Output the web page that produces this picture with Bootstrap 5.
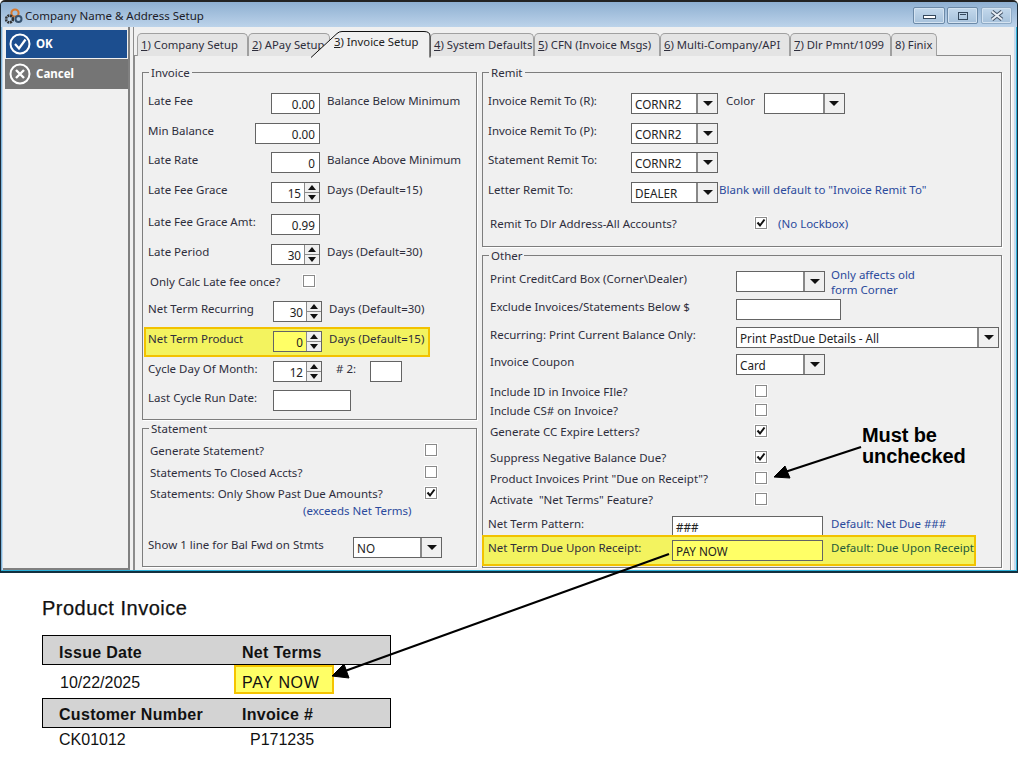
<!doctype html>
<html lang="en"><head><meta charset="utf-8"><title>Company Name &amp; Address Setup</title>
<link href="https://cdn.jsdelivr.net/npm/bootstrap@5.3.0/dist/css/bootstrap.min.css" rel="stylesheet">
<style>
html,body{margin:0;width:1018px;height:758px;overflow:hidden;background:#fff}
body{font-family:"Noto Sans","Liberation Sans",sans-serif;font-size:11.5px;line-height:15px;color:#2e2e3c}
.stage{position:relative;width:1018px;height:758px}
.win{height:573px;width:1018px;background:#c4d9ec;border:1px solid #1b2a38;border-top:2px solid #222;border-bottom:2px solid #12303f;box-shadow:inset 0 -1px 0 #2db0d8,inset -1px 0 0 #2db0d8,inset 1px 0 0 #7fb6dc;border-radius:5px 5px 0 0}
.ttl{height:25px;background:linear-gradient(#8eafd1,#bcd3ea);padding:2px 5px 0 3px;border-radius:4px 4px 0 0}
.ttl-t{font-size:11.5px;margin-left:1px;color:#1c1c28}
.wb{height:17px;border:1px solid #6c8aa8;background:linear-gradient(#c4d9ec,#a6c1db);box-shadow:inset 0 0 0 1px #d4e3f1;border-radius:2px}
.wb1{width:32px;margin-right:2px}.wb2{width:31px;margin-right:3px}.wb3{width:31px;border-color:#8fabc6}
.wbody{height:543px;margin:0 3px 0 2px}
.side{width:127px;background:#f0f0f0;border-right:2px solid #808080;border-bottom:2px solid #808080;padding-top:3px;flex:none}
.sbtn{height:29px;width:123px;border:0;border-radius:0;color:#fff;font-weight:700;font-size:11.5px;padding:0 0 0 4px;text-align:left;gap:5px;display:flex;align-items:center}
.sbtn:hover{color:#fff}
.s-ok{background:#1c4e8f;margin:0 0 1px 3px;width:121px;height:28px;padding-left:3px}
.s-ok:hover{background:#1c4e8f}
.s-cn{background:#757575;margin-left:2px;height:30px}
.s-cn:hover{background:#757575}
.gut{width:3px;background:#f0f0f0;flex:none}
.main{flex:1;background:#f0f0f0;padding-top:6px;position:relative;border-left:1px solid #8c8c8c}
.tabs{height:23px;padding-left:3px;flex-wrap:nowrap;margin:0;border:0;position:relative;z-index:2}
.tabs .nav-link{height:23px;padding:3px 0 0 3px;margin:0;border:1px solid #a0a0a0;border-bottom:0;border-radius:5px 5px 0 0;background:#e4e4e4;color:#2e2e3c;font-size:11.3px;line-height:15px;white-space:nowrap;text-align:left;width:var(--w)}
.t1{--w:111px}.t2{--w:82px}.t4{--w:104px}.t5{--w:126px}.t6{--w:130px}.t7{--w:101px}.t8{--w:46px}
.tabs .nav-link.t3{position:relative;width:118px;height:26px;margin:-2px 0 0 -18px;padding:3px 0 0 22px;background:none;border:0;color:#222}
.t3 svg{position:absolute;left:-1px;top:0}
.t3 span{position:relative}
.page{height:515px;border:1px solid #8c8c8c;border-bottom:0;padding:16px 0 0 7px;gap:5px;background:#f0f0f0;margin:-1px 3px 0 0;box-shadow:1px 0 0 #fff}
.c1{width:335px}.c2{width:520px}
.col-stack{display:flex;flex-direction:column;gap:8px}
.grp{position:relative;border:1px solid #7d7d7d;padding-left:5px;box-shadow:1px 1px 0 #fff}
.lg{position:absolute;top:-8px;left:6px;background:#f0f0f0;padding:0 2px}
.g-inv{height:348px;padding-top:20px}
.g-stm{height:139px;padding-top:14px}
.g-rem{height:175px;padding-top:20px}
.g-oth{height:313px;padding-top:15px}
.rows{display:grid;align-content:start}
.r-inv{grid-template-rows:30px 29px 30px 32px 30px 30px 27px 30px 30px 29px 21px}
.r-stm{grid-template-rows:22px 21px 17px 34px 21px}
.r-rem{grid-template-rows:30px 29px 30px 34px 15px}
.r-oth{grid-template-rows:28px 28px 27px 30px 19px 21px 26px 21px 21px 24px 24px 21px}
.rw{display:flex;align-items:flex-start;white-space:nowrap}
.rw>span{flex:none}
.i2{padding-left:2px}
.w107{width:107px}.w123{width:123px}.w125{width:125px}.w153{width:153px}.w275{width:275px}.w205{width:205px}.w143{width:143px}
.w246{width:246px}.w265{width:265px}.w184{width:184px}
.pl155{padding-left:155px}
.tb,.sel,.spn{height:21px;border:1px solid #646464;background:#fff;display:flex;flex:none;font-size:11.7px;line-height:18px;color:#222}
.tb{padding:1px 4px 0;justify-content:flex-end}
.tl{justify-content:flex-start;padding-left:3px}
.spn{width:49px}
.spn>span:first-child{flex:1;text-align:right;padding:1px 3px 0 0}
.sp-b{width:15px;border-left:1px solid #8a8a8a;display:flex;flex-direction:column;background:#f0f0f0}
.sp-b i{flex:1;display:flex;align-items:center;justify-content:center}
.sp-b i+i{border-top:1px solid #8a8a8a}
.sp-b i::after{content:"";border:4px solid transparent;border-top:0;border-bottom:5px solid #111}
.sp-b i+i::after{border:4px solid transparent;border-bottom:0;border-top:5px solid #111}
.sel{justify-content:space-between}
.sel>span{padding:1px 0 0 3px}
.sel>i{width:21px;border-left:2px solid #888;background:#f0f0f0;display:flex;align-items:center;justify-content:center}
.sel>i::after{content:"";border:5px solid transparent;border-bottom:0;border-top:5px solid #111}
.x48{width:49px}.x64{width:65px}.x50{width:32px}.x77{width:78px}.x105{width:105px}.x151{width:151px}
.s87{width:87px}.s81{width:81px}.s89{width:89px}.s263{width:263px}
.chk{width:12px;height:12px;flex:none;background:#fff;border:1px solid #8a8a8a;box-shadow:0 0 0 1px #fdfdfd;margin-top:1px;display:block}
.chk svg{display:block}
.ml7{margin-left:7px}.ml6{margin-left:6px}.ml1{margin-left:1px}.ml11{margin-left:11px}.mr9{margin-right:9px}.ml14{margin-left:14px}.mr13{margin-right:14px}.blu{color:#2b4a9c}
.up4{margin-top:-4px}
.hl{background:#f3f35f;border:2px solid #f2c200}
.hl .blu{color:#245a3a}
.hl .tb,.hl .spn>span:first-child{background:#ffff66}
.h-a{margin:-4px 0 -5px -4px;padding:2px 0 0 2px;width:286px;height:30px}
.h-b{margin:-5px 0 -5px -6px;padding:3px 0 0 4px;width:494px;height:31px}
.note{position:absolute;left:862px;top:425px;font:700 20px/21px "Liberation Sans",Arial,sans-serif;color:#000;letter-spacing:-.1px}
.inv{margin:24px 0 0 42px;width:349px;font-family:"Liberation Sans",Arial,sans-serif;font-size:16px;line-height:18px;color:#111}
.inv h2{font:400 20px/23px "Liberation Sans",Arial,sans-serif;letter-spacing:.5px;margin:0 0 15px;color:#111;-webkit-text-stroke:.25px #111}
.bar{background:#d3d3d3;border:1px solid #000;height:30px;font-weight:700;align-items:center;letter-spacing:.3px}
.b1{padding-top:6px}.b2{padding-top:4px}
.c-a{width:199px;padding-left:16px;flex:none}
.c-b{width:200px;padding-left:17px;flex:none}
.c-c{width:200px;padding-left:18px;flex:none}
.ir{height:33px;align-items:center;padding-top:2px}
.ir2{height:24px;align-items:center}
.paybox{background:#ffff66;border:2px solid #f5c400;width:100px;height:29px;margin:-6px 0 0 -8px;padding-left:6px;line-height:27px;padding-top:2px;font-size:16px;letter-spacing:.65px}
.ind8{padding-left:8px}
.arrows{position:absolute;left:0;top:0;pointer-events:none}
</style></head><body>
<div class="stage">
<div class="win">
  <div class="ttl d-flex align-items-center">
    <svg width="20" height="18" viewBox="0 0 20 18"><circle cx="11" cy="6" r="3.6" fill="none" stroke="#d9772a" stroke-width="2"/><circle cx="5.500" cy="12" r="3.400" fill="none" stroke="#333" stroke-width="2.600" stroke-dasharray="2 .7"/><circle cx="14.500" cy="12" r="3" fill="none" stroke="#36526f" stroke-width="2"/></svg>
    <span class="ttl-t flex-grow-1">Company Name &amp; Address Setup</span>
    <div class="wb wb1 d-flex align-items-end justify-content-center pb-1"><svg width="13" height="4"><rect x=".5" y=".5" width="12" height="3" fill="#fff" stroke="#35485c"/></svg></div>
    <div class="wb wb2 d-flex align-items-center justify-content-center"><svg width="12" height="10"><rect x="1.500" y="1.500" width="9" height="7" fill="none" stroke="#35485c" stroke-width="1"/><path d="M3 3.500h6" stroke="#35485c"/></svg></div>
    <div class="wb wb3 d-flex align-items-center justify-content-center"><svg width="14" height="11"><path d="M2 1.500l10 8M12 1.500l-10 8" stroke="#47566a" stroke-width="4"/><path d="M2 1.500l10 8M12 1.500l-10 8" stroke="#e8eef5" stroke-width="2"/></svg></div>
  </div>
  <div class="wbody d-flex">
    <div class="side">
      <button class="btn sbtn s-ok"><svg width="22" height="22" viewBox="0 0 22 22"><circle cx="11" cy="11" r="9.500" fill="none" stroke="#fff" stroke-width="2"/><path d="M6 11l4 4.500 6.500-9" fill="none" stroke="#fff" stroke-width="2.200"/></svg>OK</button>
      <button class="btn sbtn s-cn"><svg width="22" height="22" viewBox="0 0 22 22"><circle cx="11" cy="11" r="9.500" fill="none" stroke="#fff" stroke-width="2"/><path d="M7 7l8 8M15 7l-8 8" stroke="#fff" stroke-width="2.400"/></svg>Cancel</button>
    </div>
    <div class="gut"></div>
    <div class="main">
      <ul class="nav nav-tabs tabs">
        <li class="nav-item"><a class="nav-link t1"><u>1</u>) Company Setup</a></li>
        <li class="nav-item"><a class="nav-link t2"><u>2</u>) APay Setup</a></li>
        <li class="nav-item"><a class="nav-link t3 active"><svg width="120" height="27" viewBox="0 0 120 27"><path d="M0 26.500L26 2.500Q28 .5 31 .5H113Q119 .5 119 5V26.500" fill="#f0f0f0" stroke="#111"/></svg><span><u>3</u>) Invoice Setup</span></a></li>
        <li class="nav-item"><a class="nav-link t4"><u>4</u>) System Defaults</a></li>
        <li class="nav-item"><a class="nav-link t5"><u>5</u>) CFN (Invoice Msgs)</a></li>
        <li class="nav-item"><a class="nav-link t6"><u>6</u>) Multi-Company/API</a></li>
        <li class="nav-item"><a class="nav-link t7"><u>7</u>) Dlr Pmnt/1099</a></li>
        <li class="nav-item"><a class="nav-link t8">8) Finix</a></li>
      </ul>
      <div class="page d-flex">
        <div class="col-stack c1">
          <section class="grp g-inv">
            <span class="lg">Invoice</span>
            <div class="rows r-inv">
              <div class="rw"><span class="w123">Late Fee</span><span class="tb x48">0.00</span><span class="ml7">Balance Below Minimum</span></div>
              <div class="rw"><span class="w107">Min Balance</span><span class="tb x64">0.00</span></div>
              <div class="rw"><span class="w123">Late Rate</span><span class="tb x48">0</span><span class="ml7">Balance Above Minimum</span></div>
              <div class="rw"><span class="w123">Late Fee Grace</span><span class="spn"><span>15</span><span class="sp-b"><i></i><i></i></span></span><span class="ml7">Days (Default=15)</span></div>
              <div class="rw"><span class="w123">Late Fee Grace Amt:</span><span class="tb x48">0.99</span></div>
              <div class="rw"><span class="w123">Late Period</span><span class="spn"><span>30</span><span class="sp-b"><i></i><i></i></span></span><span class="ml7">Days (Default=30)</span></div>
              <div class="rw i2"><span class="w153">Only Calc Late fee once?</span><span class="chk"></span></div>
              <div class="rw"><span class="w125">Net Term Recurring</span><span class="spn"><span>30</span><span class="sp-b"><i></i><i></i></span></span><span class="ml7">Days (Default=30)</span></div>
              <div class="rw hl h-a"><span class="w125">Net Term Product</span><span class="spn"><span>0</span><span class="sp-b"><i></i><i></i></span></span><span class="ml7">Days (Default=15)</span></div>
              <div class="rw"><span class="w125">Cycle Day Of Month:</span><span class="spn"><span>12</span><span class="sp-b"><i></i><i></i></span></span><span class="ml14 mr13"># 2:</span><span class="tb x50"></span></div>
              <div class="rw"><span class="w125">Last Cycle Run Date:</span><span class="tb x77"></span></div>
            </div>
          </section>
          <section class="grp g-stm">
            <span class="lg">Statement</span>
            <div class="rows r-stm">
              <div class="rw i2"><span class="w275">Generate Statement?</span><span class="chk"></span></div>
              <div class="rw i2"><span class="w275">Statements To Closed Accts?</span><span class="chk"></span></div>
              <div class="rw i2"><span class="w275">Statements: Only Show Past Due Amounts?</span><span class="chk"><svg width="10" height="10" viewBox="0 0 10 10"><path d="M1.500 4.500l2.500 3 4.500-6" fill="none" stroke="#111" stroke-width="2"/></svg></span></div>
              <div class="rw blu"><span class="pl155">(exceeds Net Terms)</span></div>
              <div class="rw"><span class="w205">Show 1 line for Bal Fwd on Stmts</span><span class="sel s89"><span>NO</span><i></i></span></div>
            </div>
          </section>
        </div>
        <div class="col-stack c2">
          <section class="grp g-rem">
            <span class="lg">Remit</span>
            <div class="rows r-rem">
              <div class="rw"><span class="w143">Invoice Remit To (R):</span><span class="sel s87"><span>CORNR2</span><i></i></span><span class="ms-2 mr9">Color</span><span class="sel s81"><span></span><i></i></span></div>
              <div class="rw"><span class="w143">Invoice Remit To (P):</span><span class="sel s87"><span>CORNR2</span><i></i></span></div>
              <div class="rw"><span class="w143">Statement Remit To:</span><span class="sel s87"><span>CORNR2</span><i></i></span></div>
              <div class="rw"><span class="w143">Letter Remit To:</span><span class="sel s87"><span>DEALER</span><i></i></span><span class="blu ml1">Blank will default to "Invoice Remit To"</span></div>
              <div class="rw i2"><span class="w265">Remit To Dlr Address-All Accounts?</span><span class="chk"><svg width="10" height="10" viewBox="0 0 10 10"><path d="M1.500 4.500l2.500 3 4.500-6" fill="none" stroke="#111" stroke-width="2"/></svg></span><span class="blu ml11">(No Lockbox)</span></div>
            </div>
          </section>
          <section class="grp g-oth">
            <span class="lg">Other</span>
            <div class="rows r-oth">
              <div class="rw i2"><span class="w246">Print CreditCard Box (Corner\Dealer)</span><span class="sel s89"><span></span><i></i></span><span class="blu ml6 up4">Only affects old<br>form Corner</span></div>
              <div class="rw i2"><span class="w246">Exclude Invoices/Statements Below $</span><span class="tb x105"></span></div>
              <div class="rw i2"><span class="w246">Recurring: Print Current Balance Only:</span><span class="sel s263"><span>Print PastDue Details - All</span><i></i></span></div>
              <div class="rw i2"><span class="w246">Invoice Coupon</span><span class="sel s89"><span>Card</span><i></i></span></div>
              <div class="rw i2"><span class="w265">Include ID in Invoice FIle?</span><span class="chk"></span></div>
              <div class="rw i2"><span class="w265">Include CS# on Invoice?</span><span class="chk"></span></div>
              <div class="rw i2"><span class="w265">Generate CC Expire Letters?</span><span class="chk"><svg width="10" height="10" viewBox="0 0 10 10"><path d="M1.500 4.500l2.500 3 4.500-6" fill="none" stroke="#111" stroke-width="2"/></svg></span></div>
              <div class="rw i2"><span class="w265">Suppress Negative Balance Due?</span><span class="chk"><svg width="10" height="10" viewBox="0 0 10 10"><path d="M1.500 4.500l2.500 3 4.500-6" fill="none" stroke="#111" stroke-width="2"/></svg></span></div>
              <div class="rw i2"><span class="w265">Product Invoices Print "Due on Receipt"?</span><span class="chk"></span></div>
              <div class="rw i2"><span class="w265">Activate &nbsp;"Net Terms" Feature?</span><span class="chk"></span></div>
              <div class="rw"><span class="w184">Net Term Pattern:</span><span class="tb tl x151">###</span><span class="blu ms-2">Default: Net Due ###</span></div>
              <div class="rw hl h-b"><span class="w184">Net Term Due Upon Receipt:</span><span class="tb tl x151">PAY NOW</span><span class="blu ms-2">Default: Due Upon Receipt</span></div>
            </div>
          </section>
        </div>
      </div>
    </div>
  </div>
</div>
<div class="inv">
  <h2>Product Invoice</h2>
  <div class="d-flex bar b1"><span class="c-a">Issue Date</span><span>Net Terms</span></div>
  <div class="d-flex ir"><span class="c-c">10/22/2025</span><span class="paybox">PAY NOW</span></div>
  <div class="d-flex bar b2"><span class="c-a">Customer Number</span><span>Invoice #</span></div>
  <div class="d-flex ir2"><span class="c-b">CK01012</span><span class="ind8">P171235</span></div>
</div>
<div class="note">Must be<br>unchecked</div>
<svg class="arrows" width="1018" height="758" viewBox="0 0 1018 758">
  <path d="M861 447L785 472" stroke="#000" stroke-width="2.200"/><path d="M774 477L785 466 790 478Z" fill="#000" stroke="#000"/>
  <path d="M669 554L345 671" stroke="#000" stroke-width="2.200"/><path d="M332 676L344 664 349 678Z" fill="#000" stroke="#000"/>
</svg>
</div>
</body></html>
